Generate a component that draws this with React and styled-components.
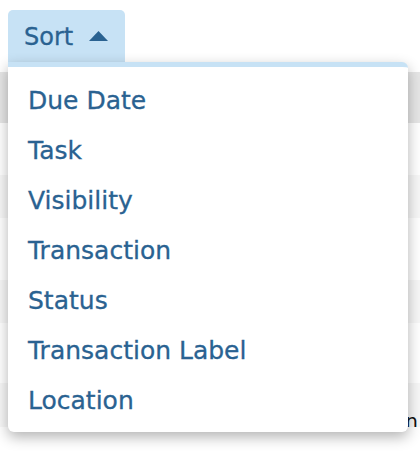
import React from "react";
import styled, { createGlobalStyle } from "styled-components";

const Global = createGlobalStyle`
  html, body {
    margin: 0;
    padding: 0;
    background: #ffffff;
  }
  body {
    font-family: "DejaVu Sans", "Noto Sans", sans-serif;
    width: 420px;
    height: 456px;
    overflow: hidden;
  }
`;

const Page = styled.div`
  position: relative;
  width: 420px;
  height: 456px;
`;

const Toolbar = styled.div`
  display: flex;
  padding: 10px 8px 0 8px;
  height: 72px;
  box-sizing: border-box;
`;

const SortButton = styled.button`
  display: flex;
  align-items: center;
  gap: 16px;
  height: 52px;
  padding: 2px 17px 0 16px;
  border: none;
  border-radius: 5px 5px 0 0;
  background: #c7e2f5;
  color: #2a6291;
  font-family: inherit;
  font-size: 24px;
  -webkit-text-stroke: 0.3px #2a6291;
  cursor: pointer;
`;

const Caret = styled.svg`
  width: 19px;
  height: 10px;
  display: block;
  margin-top: -2px;
`;

const Table = styled.div`
  display: flex;
  flex-direction: column;
`;

const Row = styled.div`
  height: ${(p) => p.h}px;
  background: ${(p) => (p.head ? "#e6e6e6" : p.odd ? "#f7f7f7" : "#ffffff")};
  display: flex;
  align-items: flex-end;
  justify-content: flex-end;
  padding-right: 2px;
  box-sizing: border-box;
`;

const CellText = styled.span`
  font-family: "DejaVu Sans", sans-serif;
  font-size: 20px;
  line-height: 20px;
  color: #111;
  margin-bottom: -4px;
  white-space: nowrap;
`;

const Menu = styled.ul`
  position: absolute;
  top: 62px;
  left: 8px;
  width: 400px;
  margin: 0;
  padding: 0 0 7px 0;
  list-style: none;
  background: #ffffff;
  border-top: 5px solid #c7e2f5;
  border-radius: 0 6px 6px 6px;
  box-shadow: 0 5px 14px rgba(0, 0, 0, 0.3);
  box-sizing: border-box;
`;

const Item = styled.li`
  height: 50px;
  display: flex;
  align-items: center;
  padding-left: 20px;
  font-size: 25px;
  color: #2a6291;
  -webkit-text-stroke: 0.3px #2a6291;
  &:first-child {
    margin-top: 8px;
  }
`;

const rows = [
  { h: 51, head: true },
  { h: 52 },
  { h: 43, odd: true },
  { h: 62 },
  { h: 43, odd: true },
  { h: 60 },
  { h: 44, odd: true, text: "Location" },
  { h: 30 },
];

const options = [
  "Due Date",
  "Task",
  "Visibility",
  "Transaction",
  "Status",
  "Transaction Label",
  "Location",
];

export default function App() {
  return (
    <Page>
      <Global />
      <Toolbar>
        <SortButton>
          Sort
          <Caret viewBox="0 0 19 10">
            <path d="M9.5 0 L19 10 L0 10 Z" fill="#2a6291" />
          </Caret>
        </SortButton>
      </Toolbar>
      <Table>
        {rows.map((r, i) => (
          <Row key={i} h={r.h} head={r.head} odd={r.odd}>
            {r.text && <CellText>{r.text}</CellText>}
          </Row>
        ))}
      </Table>
      <Menu>
        {options.map((o) => (
          <Item key={o}>{o}</Item>
        ))}
      </Menu>
    </Page>
  );
}
